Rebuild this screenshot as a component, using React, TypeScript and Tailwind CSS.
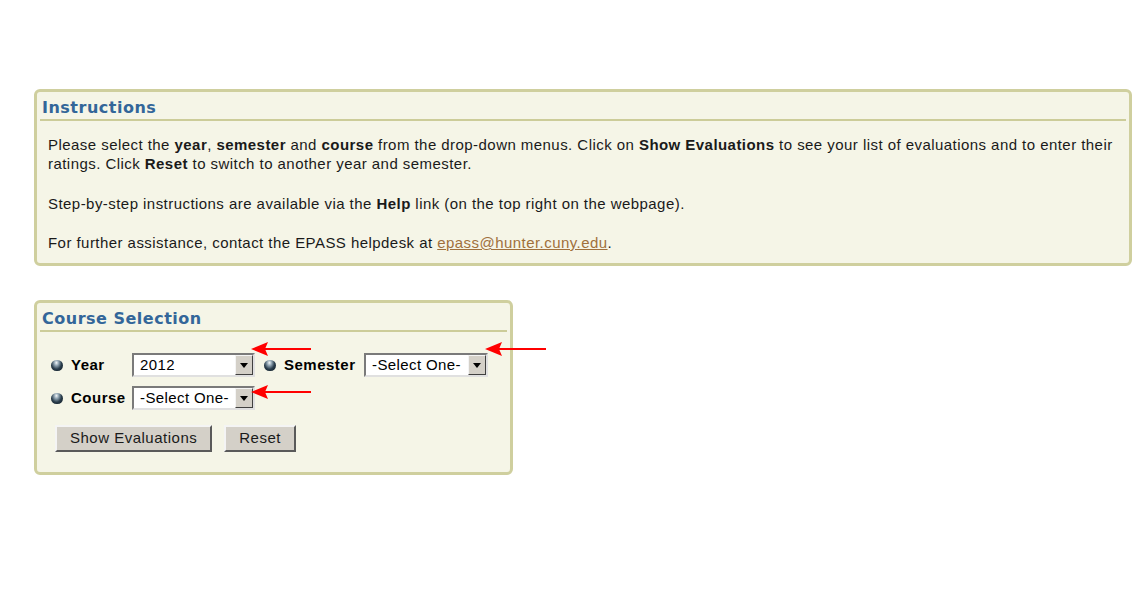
import React from 'react';

const bodyFont = { fontFamily: '"Liberation Sans", Arial, sans-serif' };

function Panel({ title, className, children }: { title: string; className?: string; children: React.ReactNode }) {
  return (
    <div className={`rounded-[6px] border-[3px] border-[#cfcf9e] bg-[#f5f5e7] px-[3px] ${className ?? ''}`}>
      <div className="border-b-[2px] border-[#cccc99] pt-[6px] pb-[1px] pl-[2px]">
        <h2
          className="text-[16px] font-bold leading-[20px] tracking-[0.5px] text-[#336699]"
          style={{ fontFamily: '"DejaVu Sans", Verdana, sans-serif' }}
        >
          {title}
        </h2>
      </div>
      {children}
    </div>
  );
}

function Bullet() {
  return (
    <span className="inline-block h-[11px] w-[12px] shrink-0 rounded-full bg-[radial-gradient(ellipse_at_45%_25%,#f4f8fa_0%,#8ea2b0_25%,#2a3d4c_55%,#0a141c_100%)]" />
  );
}

function Select({ value, width }: { value: string; width: number }) {
  return (
    <div
      className="flex h-[24px] items-stretch border-2 border-t-[#7a7a7a] border-l-[#7a7a7a] border-r-[#e0e0e0] border-b-[#e0e0e0] bg-white"
      style={{ width }}
    >
      <span className="flex flex-1 items-center pl-[6px] text-[15px] tracking-[0.4px] text-black" style={bodyFont}>
        {value}
      </span>
      <span className="flex w-[18px] items-center justify-center border border-t-[#f4f4f4] border-l-[#f4f4f4] border-r-[#404040] border-b-[#404040] bg-[#d4d0c8]">
        <svg width="8" height="5" viewBox="0 0 8 5">
          <path d="M0 0h8L4 5z" fill="#000" />
        </svg>
      </span>
    </div>
  );
}

function Button({ label }: { label: string }) {
  return (
    <button
      className="h-[27px] border-2 border-t-[#f4f4f4] border-l-[#f4f4f4] border-r-[#5a5a5a] border-b-[#5a5a5a] bg-[#d4d0c8] px-[13px] text-[15px] tracking-[0.5px] text-[#1a1a1a]"
      style={bodyFont}
    >
      {label}
    </button>
  );
}

function Arrow({ x, y, length }: { x: number; y: number; length: number }) {
  return (
    <svg
      className="absolute"
      style={{ left: x, top: y - 8 }}
      width={length}
      height={16}
      viewBox={`0 0 ${length} 16`}
    >
      <line x1={10} y1={8} x2={length} y2={8} stroke="#ff0000" strokeWidth={2} />
      <path d="M0 8 L17 1 L14 8 L17 15 Z" fill="#ff0000" />
    </svg>
  );
}

export default function App() {
  return (
    <div className="relative h-[600px] w-[1146px] bg-white" style={bodyFont}>
      <div className="pt-[89px] pl-[34px] pr-[14px]">
        <Panel title="Instructions" className="h-[177px]">
          <div className="pl-[8px] pt-[14px] text-[15px] leading-[19px] tracking-[0.45px] text-[#1a1a1a]">
            <p>
              Please select the <b>year</b>, <b>semester</b> and <b>course</b> from the drop-down menus. Click on{' '}
              <b>Show Evaluations</b> to see your list of evaluations and to enter their ratings. Click <b>Reset</b> to
              switch to another year and semester.
            </p>
            <p className="mt-[21px]">
              Step-by-step instructions are available via the <b>Help</b> link (on the top right on the webpage).
            </p>
            <p className="mt-[20px]">
              For further assistance, contact the EPASS helpdesk at{' '}
              <a className="text-[#a0703c] underline">epass@hunter.cuny.edu</a>.
            </p>
          </div>
        </Panel>

        <Panel title="Course Selection" className="mt-[34px] h-[175px] w-[479px]">
          <div className="pl-[11px] pt-[21px] text-[15px] tracking-[0.5px] text-black">
            <div className="flex items-center">
              <Bullet />
              <span className="ml-[8px] w-[61px] font-bold">Year</span>
              <Select value="2012" width={123} />
              <span className="ml-[9px] flex"><Bullet /></span>
              <span className="ml-[8px] w-[80px] font-bold">Semester</span>
              <Select value="-Select One-" width={124} />
            </div>
            <div className="mt-[9px] flex items-center">
              <Bullet />
              <span className="ml-[8px] w-[61px] font-bold">Course</span>
              <Select value="-Select One-" width={123} />
            </div>
            <div className="mt-[15px] flex gap-[12px] pl-[4px]">
              <Button label="Show Evaluations" />
              <Button label="Reset" />
            </div>
          </div>
        </Panel>
      </div>

      <Arrow x={251} y={349} length={60} />
      <Arrow x={485} y={349} length={61} />
      <Arrow x={251} y={392} length={60} />
    </div>
  );
}
